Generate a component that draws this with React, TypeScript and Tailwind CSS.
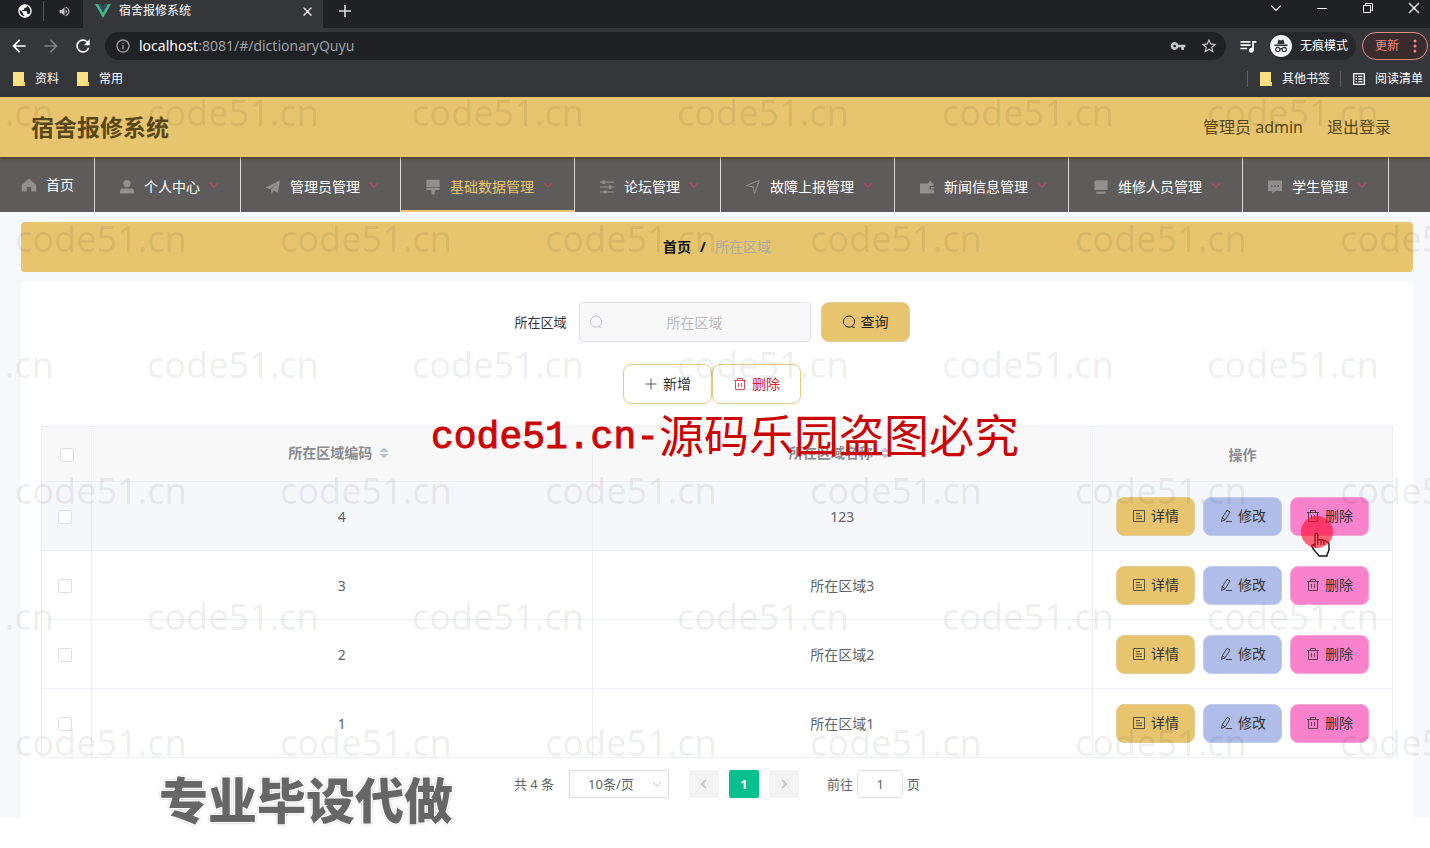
import { useState, type ReactNode } from 'react'
import {
  MdArrowBack, MdArrowForward, MdClose, MdInfoOutline, MdOutlineListAlt, MdOutlineStarBorder,
  MdPublic, MdQueueMusic, MdRefresh, MdVolumeUp, MdVpnKey,
} from 'react-icons/md'

type IconName = 'home' | 'user' | 'promotion' | 'platform' | 'operation' | 'position' | 'wallet' | 'cooperation' | 'comment'

const MENUS: { label: string; icon: IconName; active?: boolean }[] = [
  { label: '首页', icon: 'home' },
  { label: '个人中心', icon: 'user' },
  { label: '管理员管理', icon: 'promotion' },
  { label: '基础数据管理', icon: 'platform', active: true },
  { label: '论坛管理', icon: 'operation' },
  { label: '故障上报管理', icon: 'position' },
  { label: '新闻信息管理', icon: 'wallet' },
  { label: '维修人员管理', icon: 'cooperation' },
  { label: '学生管理', icon: 'comment' },
]

const ROWS = [
  { code: 4, name: '123' },
  { code: 3, name: '所在区域3' },
  { code: 2, name: '所在区域2' },
  { code: 1, name: '所在区域1' },
]

const MENU_SHAPES: Record<IconName, ReactNode> = {
  home: <path d="M8 1.5 L15.2 8 V14.5 H10.2 V10 H5.8 V14.5 H0.8 V8 Z" />,
  user: <><circle cx="8" cy="4.6" r="3.6" /><path d="M1 14.6 V12.4 Q1 9.6 4 9.6 H12 Q15 9.6 15 12.4 V14.6 Z" /></>,
  promotion: <path d="M0.8 8.6 L15 1.2 L12.8 13.6 L8.6 11.6 L6.6 14.8 L6 10.6 L12 4.6 L4.8 10.2 Z" />,
  platform: <path d="M1.4 0.8 H14.6 V8 H1.4 Z M1.4 8.8 H14.6 V11 H10.4 L9.2 15.4 H6.8 L6.4 11 H1.4 Z" />,
  operation: (
    <g>
      <path d="M1 2.6 H15 V3.7 H1 Z M1 7.5 H15 V8.6 H1 Z M1 12.5 H15 V13.6 H1 Z" />
      <path d="M3.4 1.4 H5.8 V4.9 H3.4 Z M9.8 6.3 H12.2 V9.8 H9.8 Z M5 11.3 H7.4 V14.8 H5 Z" />
    </g>
  ),
  position: <path d="M1.4 6.6 L14.4 1.4 L9.6 14.6 L8.2 8 Z" fill="none" stroke="currentColor" />,
  wallet: <path d="M1 4.6 H9 L11.4 1.6 L13.6 4.6 H14.4 V7 H10.6 V10.4 H14.8 V14.6 H1 Z M12 8 H15.4 V9.4 H12 Z" />,
  cooperation: <path d="M3 1.2 H14.6 V11 H1.4 V3 Z M3.2 12.4 H12.8 V14.8 H3.2 Z" />,
  comment: <path fillRule="evenodd" d="M1 1.6 H15 V12 H8.6 L5.2 15 V12 H1 Z M4 6 V7.8 H5.6 V6 Z M7.2 6 V7.8 H8.8 V6 Z M10.4 6 V7.8 H12 V6 Z" />,
}

function MenuIcon({ name }: { name: IconName }) {
  return (
    <svg viewBox="0 0 16 16" className="mx-1 size-4 shrink-0 text-[#918f90]" fill="currentColor">
      {MENU_SHAPES[name]}
    </svg>
  )
}

function LineIcon({ children, className = '' }: { children: ReactNode; className?: string }) {
  return (
    <svg viewBox="0 0 14 14" className={`size-3.5 shrink-0 ${className}`} fill="none" stroke="currentColor">
      {children}
    </svg>
  )
}

const SearchIcon = ({ className }: { className?: string }) => (
  <LineIcon className={className}><circle cx="7" cy="6.6" r="5.6" /><path d="M9.4 11.6 L12.6 12.6" /></LineIcon>
)
const PlusIcon = () => <LineIcon><path d="M7 1.5 V12.5 M1.5 7 H12.5" strokeWidth="0.8" /></LineIcon>
const TrashIcon = () => (
  <LineIcon>
    <path d="M1 3.5 H13 M4.5 3.5 V1.5 H9.5 V3.5 M2.5 3.5 V12.5 H11.5 V3.5 M5.5 6 V10 M8.5 6 V10" strokeWidth="0.8" />
  </LineIcon>
)
const DocIcon = () => (
  <LineIcon><path d="M1.5 1.5 H12.5 V12.5 H1.5 Z M4 4.5 H8 M4 7 H10 M4 9.5 H10" strokeWidth="0.8" /></LineIcon>
)
const EditIcon = () => (
  <LineIcon>
    <path d="M8.2 1.2 L11 3 L6.2 10.8 L2.6 12.4 L3.2 8.8 Z M6.8 12.5 H13 M3.2 8.8 L6.2 10.8" strokeWidth="0.9" />
  </LineIcon>
)
const ChevronDown = ({ className }: { className?: string }) => (
  <svg viewBox="0 0 12 12" className={className} fill="none" stroke="currentColor"><path d="M2 4 L6 8 L10 4" /></svg>
)
const FolderIcon = () => (
  <svg viewBox="0 0 12 14" className="h-3.5 w-3 shrink-0">
    <path d="M0 0 H11 V10 H12 V14 H0 Z" fill="#fbe083" />
    <path d="M10 10 H12 V14 H10 Z" fill="#f3cf66" />
  </svg>
)
const Incognito = () => (
  <svg viewBox="0 0 22 22" className="size-[22px] shrink-0">
    <circle cx="11" cy="11" r="11" fill="#f1f3f4" />
    <path d="M7.4 9 L8.6 4.6 L11 5.4 L13.4 4.6 L14.6 9 Z M4.4 9.6 H17.6 V11 H4.4 Z" fill="#303134" />
    <g fill="none" stroke="#303134" strokeWidth="1.2">
      <circle cx="7.8" cy="14.4" r="2.1" /><circle cx="14.2" cy="14.4" r="2.1" /><path d="M9.9 14 Q11 13.3 12.1 14" />
    </g>
  </svg>
)

function BrowserBar() {
  return (
    <div className="bg-[#35363a] font-['Noto_Sans','Noto_Sans_CJK_SC',sans-serif] text-xs text-white">
      <div className="flex h-7 bg-[#202124]">
        <div className="flex w-[83px] items-center pb-1.5 pl-[17px]">
          <MdPublic size={16} />
          <span className="ml-2.5 h-5 w-px bg-[#55565a]" />
          <MdVolumeUp size={13} className="ml-3.5 text-[#c4c6c9]" />
        </div>
        <div className="flex w-60 items-center bg-[#35363a] pb-1.5 pl-3">
          <svg viewBox="0 0 16 14" className="h-3.5 w-4">
            <path d="M0 0 H3.2 L8 8.4 L12.8 0 H16 L8 14 Z" fill="#41b883" />
            <path d="M3.2 0 H6.2 L8 3.2 L9.8 0 H12.8 L8 8.4 Z" fill="#34495e" />
          </svg>
          <span className="ml-2">宿舍报修系统</span>
          <button aria-label="关闭标签页" className="mr-2 ml-auto"><MdClose size={15} /></button>
        </div>
        <button aria-label="新标签页" className="ml-[15px] pb-1.5">
          <LineIcon className="text-[#dadce0]"><path d="M7 1 V13 M1 7 H13" strokeWidth="1.6" /></LineIcon>
        </button>
        <div className="mr-[9px] ml-auto flex items-center gap-8 pb-3">
          <button aria-label="搜索标签页"><ChevronDown className="size-3.5" /></button>
          <button aria-label="最小化"><LineIcon><path d="M2 7.5 H12" /></LineIcon></button>
          <button aria-label="还原"><LineIcon><path d="M2.5 4.5 H9.5 V11.5 H2.5 Z M4.5 4.5 V2.5 H11.5 V9.5 H9.5" /></LineIcon></button>
          <button aria-label="关闭"><LineIcon><path d="M2 2 L12 12 M12 2 L2 12" strokeWidth="1.3" /></LineIcon></button>
        </div>
      </div>

      <div className="flex h-9 items-center pr-0.5 pl-[9px]">
        <button aria-label="后退"><MdArrowBack size={20} /></button>
        <button aria-label="前进" className="ml-3 text-[#808185]"><MdArrowForward size={20} /></button>
        <button aria-label="刷新" className="ml-3"><MdRefresh size={20} /></button>
        <div className="ml-3 flex h-7 flex-1 items-center rounded-full bg-[#202124] px-2.5">
          <MdInfoOutline size={16} className="text-[#9aa0a6]" />
          <span className="ml-2 text-sm text-[#9aa0a6]">
            <span className="text-white">localhost</span>:8081/#/dictionaryQuyu
          </span>
          <MdVpnKey size={16} className="ml-auto text-[#c4c6c9]" />
          <MdOutlineStarBorder size={18} className="mr-[-2px] ml-3.5 text-[#c4c6c9]" />
        </div>
        <MdQueueMusic size={20} className="ml-3" />
        <div className="ml-3 flex h-7 items-center gap-2 rounded-full bg-[#27282b] pr-2">
          <Incognito />
          <span>无痕模式</span>
        </div>
        <button className="ml-1.5 flex h-7 items-center gap-3.5 rounded-full border border-[#dd8b85] bg-[#3a2c2d] pr-2.5 pl-3 text-[#f28b82]">
          更新
          <svg viewBox="0 0 4 14" className="h-3.5 w-1" fill="currentColor">
            <circle cx="2" cy="2" r="1.5" /><circle cx="2" cy="7" r="1.5" /><circle cx="2" cy="12" r="1.5" />
          </svg>
        </button>
      </div>

      <div className="flex h-[33px] items-center pr-[7px] pb-1 pl-[13px]">
        <FolderIcon /><span className="ml-2.5">资料</span>
        <span className="ml-[18px] flex items-center gap-2.5"><FolderIcon />常用</span>
        <span className="ml-auto h-4 w-px bg-[#606165]" />
        <span className="ml-3 flex items-center gap-2.5"><FolderIcon />其他书签</span>
        <span className="ml-2.5 h-4 w-px bg-[#606165]" />
        <span className="ml-2.5 flex items-center gap-2"><MdOutlineListAlt size={16} />阅读清单</span>
      </div>
    </div>
  )
}

function Watermark() {
  return (
    <div aria-hidden className="pointer-events-none absolute inset-x-0 top-0 z-2 flex flex-col gap-[94px] overflow-hidden text-[36px] leading-8 text-black/8">
      {[0, 1, 2, 3, 4, 5].map(row => (
        <div key={row} className={row % 2 ? 'flex pl-[15px]' : '-ml-[118px] flex'}>
          {[0, 1, 2, 3, 4, 5].map(col => (
            <span key={col} className="w-[265px] shrink-0">code51.cn</span>
          ))}
        </div>
      ))}
    </div>
  )
}

function SortHead({ children }: { children: ReactNode }) {
  return (
    <th className="border-r border-b border-[#ebeef5] pt-0 pb-0.5 font-bold">
      <span className="flex items-center justify-center gap-[7px] pr-1.5">
        {children}
        <svg viewBox="0 0 10 12" className="h-3 w-2.5" fill="#c0c4cc"><path d="M5 0.5 L10 5 H0 Z M0 7 H10 L5 11.5 Z" /></svg>
      </span>
    </th>
  )
}

const ACTION = 'relative flex h-[39px] items-center gap-[5px] rounded-lg border px-[15px] text-sm text-[#333]'
const CHECK = 'block size-3.5 appearance-none rounded-xs border border-[#dcdfe6] bg-white checked:bg-[#00c292]'

export default function App() {
  const [keyword, setKeyword] = useState('')
  const [checked, setChecked] = useState<number[]>([])

  const toggle = (code: number) =>
    setChecked(list => (list.includes(code) ? list.filter(c => c !== code) : [...list, code]))

  return (
    <div className="min-h-screen overflow-x-hidden bg-white">
      <BrowserBar />

      <div className="relative font-['Noto_Sans','Noto_Sans_CJK_SC',sans-serif] text-sm text-[#606266]">
        <header className="relative z-1 flex h-[60px] items-center justify-between bg-[#e7c56e] pr-[39px] pl-[31px] text-base text-[#5a4718] shadow-[0_1px_3px_rgba(70,40,0,0.7)]">
          <h1 className="text-[23px] font-bold">宿舍报修系统</h1>
          <div className="flex gap-6">
            <span>管理员 admin</span>
            <a href="#/login">退出登录</a>
          </div>
        </header>

        {/* 导航菜单 */}
        <nav className="flex h-[55px] bg-[#5e5b5b] text-white">
          {MENUS.map((m, i) => (
            <a
              key={m.label}
              href="#/dictionaryQuyu"
              className={`flex shrink-0 items-center border-r border-[#d8d8d8] pr-5 ${i ? 'pt-1 pl-5' : 'pl-[17px]'} ${m.active ? 'text-[#e7c56e] shadow-[inset_0_-2px_0_#e7c56e]' : ''}`}
            >
              <MenuIcon name={m.icon} />
              <span className="ml-[5px]">{m.label}</span>
              {i > 0 && <ChevronDown className="mb-1 ml-2 size-3 shrink-0 stroke-[1.3] text-[#b04a5c]" />}
            </a>
          ))}
        </nav>

        <main className="bg-[#f6f8fb] pt-2.5 pr-[17px] pl-[21px]">
          <div className="flex h-[50px] items-center justify-center gap-[9px] rounded bg-[#e7c56e]">
            <a href="#/" className="font-bold text-[#111]">首页</a>
            <span className="font-bold text-[#111]">/</span>
            <span className="text-[#a9a9a3]">所在区域</span>
          </div>

          <div className="mt-2.5 rounded-t bg-white p-5">
            <form className="flex items-center justify-center" onSubmit={e => e.preventDefault()}>
              <label htmlFor="quyu" className="pr-3 text-[13px] text-[#333]">所在区域</label>
              <div className="relative mr-2.5">
                <SearchIcon className="absolute top-[13px] left-2.5 text-[#c0c4cc]" />
                <input
                  id="quyu"
                  value={keyword}
                  onChange={e => setKeyword(e.target.value)}
                  placeholder="所在区域"
                  className="block h-10 w-[232px] rounded border border-[#dcdfe6] bg-[#f8f8f8] text-center text-sm outline-none placeholder:text-[#b9bbbf]"
                />
              </div>
              <button className="mr-2.5 flex h-10 items-center gap-[5px] rounded-lg border border-[#e2cd94] bg-[#e7c56e] px-5 text-[#222]">
                <SearchIcon />查询
              </button>
            </form>

            <div className="mt-[22px] mr-2.5 flex justify-center">
              <button className="flex h-10 items-center gap-[5px] rounded-lg border border-[#e4cb83] bg-white px-5 text-[#333]">
                <PlusIcon />新增
              </button>
              <button className="flex h-10 items-center gap-[5px] rounded-lg border border-[#e4cb83] bg-white px-5 text-[#d0212d]">
                <TrashIcon />删除
              </button>
            </div>

            <table className="mt-[22px] w-full table-fixed border-separate border-spacing-0 border-t border-l border-[#ebeef5] text-center">
              <colgroup>
                <col className="w-[50px]" />
                <col />
                <col />
                <col className="w-[300px]" />
              </colgroup>
              <thead className="bg-[#f8f8f8] text-[#8a8c90]">
                <tr className="h-[55px]">
                  <th className="border-r border-b border-[#ebeef5] pt-0.5 pl-[18px]">
                    <input
                      type="checkbox"
                      aria-label="全选"
                      className={CHECK}
                      checked={checked.length === ROWS.length}
                      onChange={e => setChecked(e.target.checked ? ROWS.map(r => r.code) : [])}
                    />
                  </th>
                  <SortHead>所在区域编码</SortHead>
                  <SortHead>所在区域名称</SortHead>
                  <th className="border-r border-b border-[#ebeef5] pt-0.5 font-bold">操作</th>
                </tr>
              </thead>
              <tbody>
                {ROWS.map((r, i) => (
                  <tr key={r.code} className={i === 0 ? 'h-[69px] bg-[#f5f7fb]' : 'h-[69px]'}>
                    <td className="border-r border-b border-[#ebeef5] pt-0.5 pl-4">
                      <input
                        type="checkbox"
                        aria-label={`选择 ${r.name}`}
                        className={CHECK}
                        checked={checked.includes(r.code)}
                        onChange={() => toggle(r.code)}
                      />
                    </td>
                    <td className="border-r border-b border-[#ebeef5] pt-0.5">{r.code}</td>
                    <td className="border-r border-b border-[#ebeef5] pt-0.5">{r.name}</td>
                    <td className="border-r border-b border-[#ebeef5]">
                      <div className="flex justify-center gap-2">
                        <button className={`${ACTION} border-[#e2cd94] bg-[#e7c56e]`}><DocIcon />详情</button>
                        <button className={`${ACTION} border-[#c3cdec] bg-[#b0bde8]`}><EditIcon />修改</button>
                        <button className={`${ACTION} border-[#f4a5d6] bg-[#fa82cc]`}>
                          <TrashIcon />删除
                          {i === 0 && (
                            <svg viewBox="0 0 34 42" className="absolute top-[18px] left-2.5 h-[42px] w-[34px]">
                              <path
                                d="M14 19.5 Q14 17.4 15.4 17.4 Q16.8 17.4 16.8 19.5 V24 Q18.4 22.8 20 24.2 Q21.6 23 23 24.8 Q24.8 24 25.4 26 Q27.8 25.6 28 28 V33.5 Q27.4 36.4 26 38.4 V40 H18 L17 38.4 Q13.6 35.4 11.2 31.2 Q10.2 28.8 12 28.6 L14 30.4 Z"
                                fill="#fff" stroke="#111" strokeWidth="1.4"
                              />
                              <path d="M16.8 24 V29 M20 24.4 V29 M23 25 V29" stroke="#111" strokeWidth="1.2" />
                              <circle cx="16" cy="16" r="16" fill="#ff0a28" fillOpacity="0.62" />
                            </svg>
                          )}
                        </button>
                      </div>
                    </td>
                  </tr>
                ))}
              </tbody>
            </table>

            {/* 分页 */}
            <div className="mt-3 flex h-7 items-center justify-center text-[13px]">
              <span>共 4 条</span>
              <div className="relative mx-[15px]">
                <select aria-label="每页条数" className="block h-7 w-[100px] appearance-none rounded-xs border border-[#dcdfe6] bg-white pl-[18px] outline-none">
                  <option>10条/页</option>
                </select>
                <ChevronDown className="absolute top-2 right-1.5 size-3 text-[#c0c4cc]" />
              </div>
              <div className="ml-[5px] flex gap-2.5">
                <button aria-label="上一页" className="flex h-7 w-[30px] items-center justify-center rounded-xs bg-[#f4f4f5]">
                  <ChevronDown className="size-3 rotate-90 stroke-2 text-[#c0c4cc]" />
                </button>
                <button className="h-7 w-[30px] rounded-xs bg-[#07c08e] font-bold text-white">1</button>
                <button aria-label="下一页" className="flex h-7 w-[30px] items-center justify-center rounded-xs bg-[#f4f4f5]">
                  <ChevronDown className="size-3 -rotate-90 stroke-2 text-[#c0c4cc]" />
                </button>
              </div>
              <label htmlFor="page" className="ml-7">前往</label>
              <input id="page" defaultValue="1" className="mx-1 h-7 w-[46px] rounded border border-[#dcdfe6] bg-white text-center outline-none" />
              <span>页</span>
            </div>
          </div>
        </main>

        <Watermark />
        <p className="pointer-events-none absolute inset-x-0 top-[312px] z-3 flex items-center justify-center pl-5 leading-[50px] whitespace-nowrap text-[#cc0606]">
          <span className="pt-1 font-['Liberation_Mono',monospace] text-[38px] [-webkit-text-stroke:1px_#cc0606]">code51.cn-</span>
          <span className="text-[45px]">源码乐园盗图必究</span>
        </p>
        <p className="pointer-events-none absolute top-[678px] left-[159px] z-3 text-[49px] leading-[50px] font-black whitespace-nowrap text-[#666] [text-shadow:1px_1px_0_#fff,-1px_-1px_0_#fff,1px_-1px_0_#fff,-1px_1px_0_#fff,0_0_3px_#555]">
          专业毕设代做
        </p>
      </div>
    </div>
  )
}
